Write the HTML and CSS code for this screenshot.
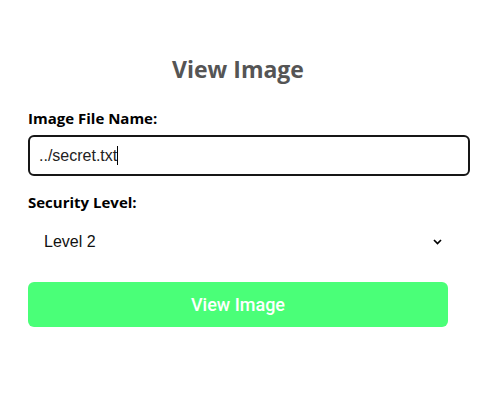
FILE: index.html
```html
<!DOCTYPE html>
<html>
<head>
<meta charset="utf-8">
<link rel="stylesheet" href="styles.css">
</head>
<body>
<div class="container">
  <h2 class="title">View Image</h2>
  <form class="form">
    <label class="label">Image File Name:</label>
    <div class="field">../secret.txt<span class="caret"></span></div>
    <label class="label label-second">Security Level:</label>
    <div class="select">
      <span>Level 2</span>
      <svg class="chevron" width="9" height="6" viewBox="0 0 9 6"><path d="M1 1 L4.5 4.5 L8 1" fill="none" stroke="#000" stroke-width="1.7"/></svg>
    </div>
    <button type="button" class="button">View Image</button>
  </form>
</div>
</body>
</html>
```
FILE: styles.css
```css
body {
  margin: 0;
  background: #fff;
  font-family: "Open Sans", sans-serif;
}
.container {
  width: 420px;
  margin: 0 28px;
  padding-top: 52px;
}
.title {
  margin: 0 0 22px;
  text-align: center;
  font-size: 23px;
  font-weight: 700;
  color: #555;
  line-height: 34px;
}
.form {
  display: flex;
  flex-direction: column;
}
.label {
  font-size: 15px;
  font-weight: 700;
  color: #000;
  line-height: 20px;
  margin-bottom: 7px;
}
.label-second {
  margin-top: 16px;
}
.field {
  width: 420px;
  box-sizing: content-box;
  padding: 9px;
  border: 2px solid #161616;
  border-radius: 6px;
  font-family: "Liberation Sans", Arial, sans-serif;
  font-size: 16px;
  line-height: 18px;
  color: #222;
  display: flex;
  align-items: center;
}
.caret {
  display: inline-block;
  width: 1px;
  height: 19px;
  background: #000;
}
.select {
  display: flex;
  align-items: center;
  justify-content: space-between;
  height: 42px;
  padding: 0 6px 0 16px;
  margin-top: 2px;
  font-family: "Liberation Sans", Arial, sans-serif;
  font-size: 16px;
  color: #111;
}
.chevron {
  display: block;
}
.button {
  margin-top: 19px;
  height: 45px;
  border: none;
  border-radius: 6px;
  background: #4aff78;
  color: #fff;
  font-family: Roboto, "Liberation Sans", Arial, sans-serif;
  font-weight: 500;
  font-size: 18px;
  cursor: pointer;
}
```
